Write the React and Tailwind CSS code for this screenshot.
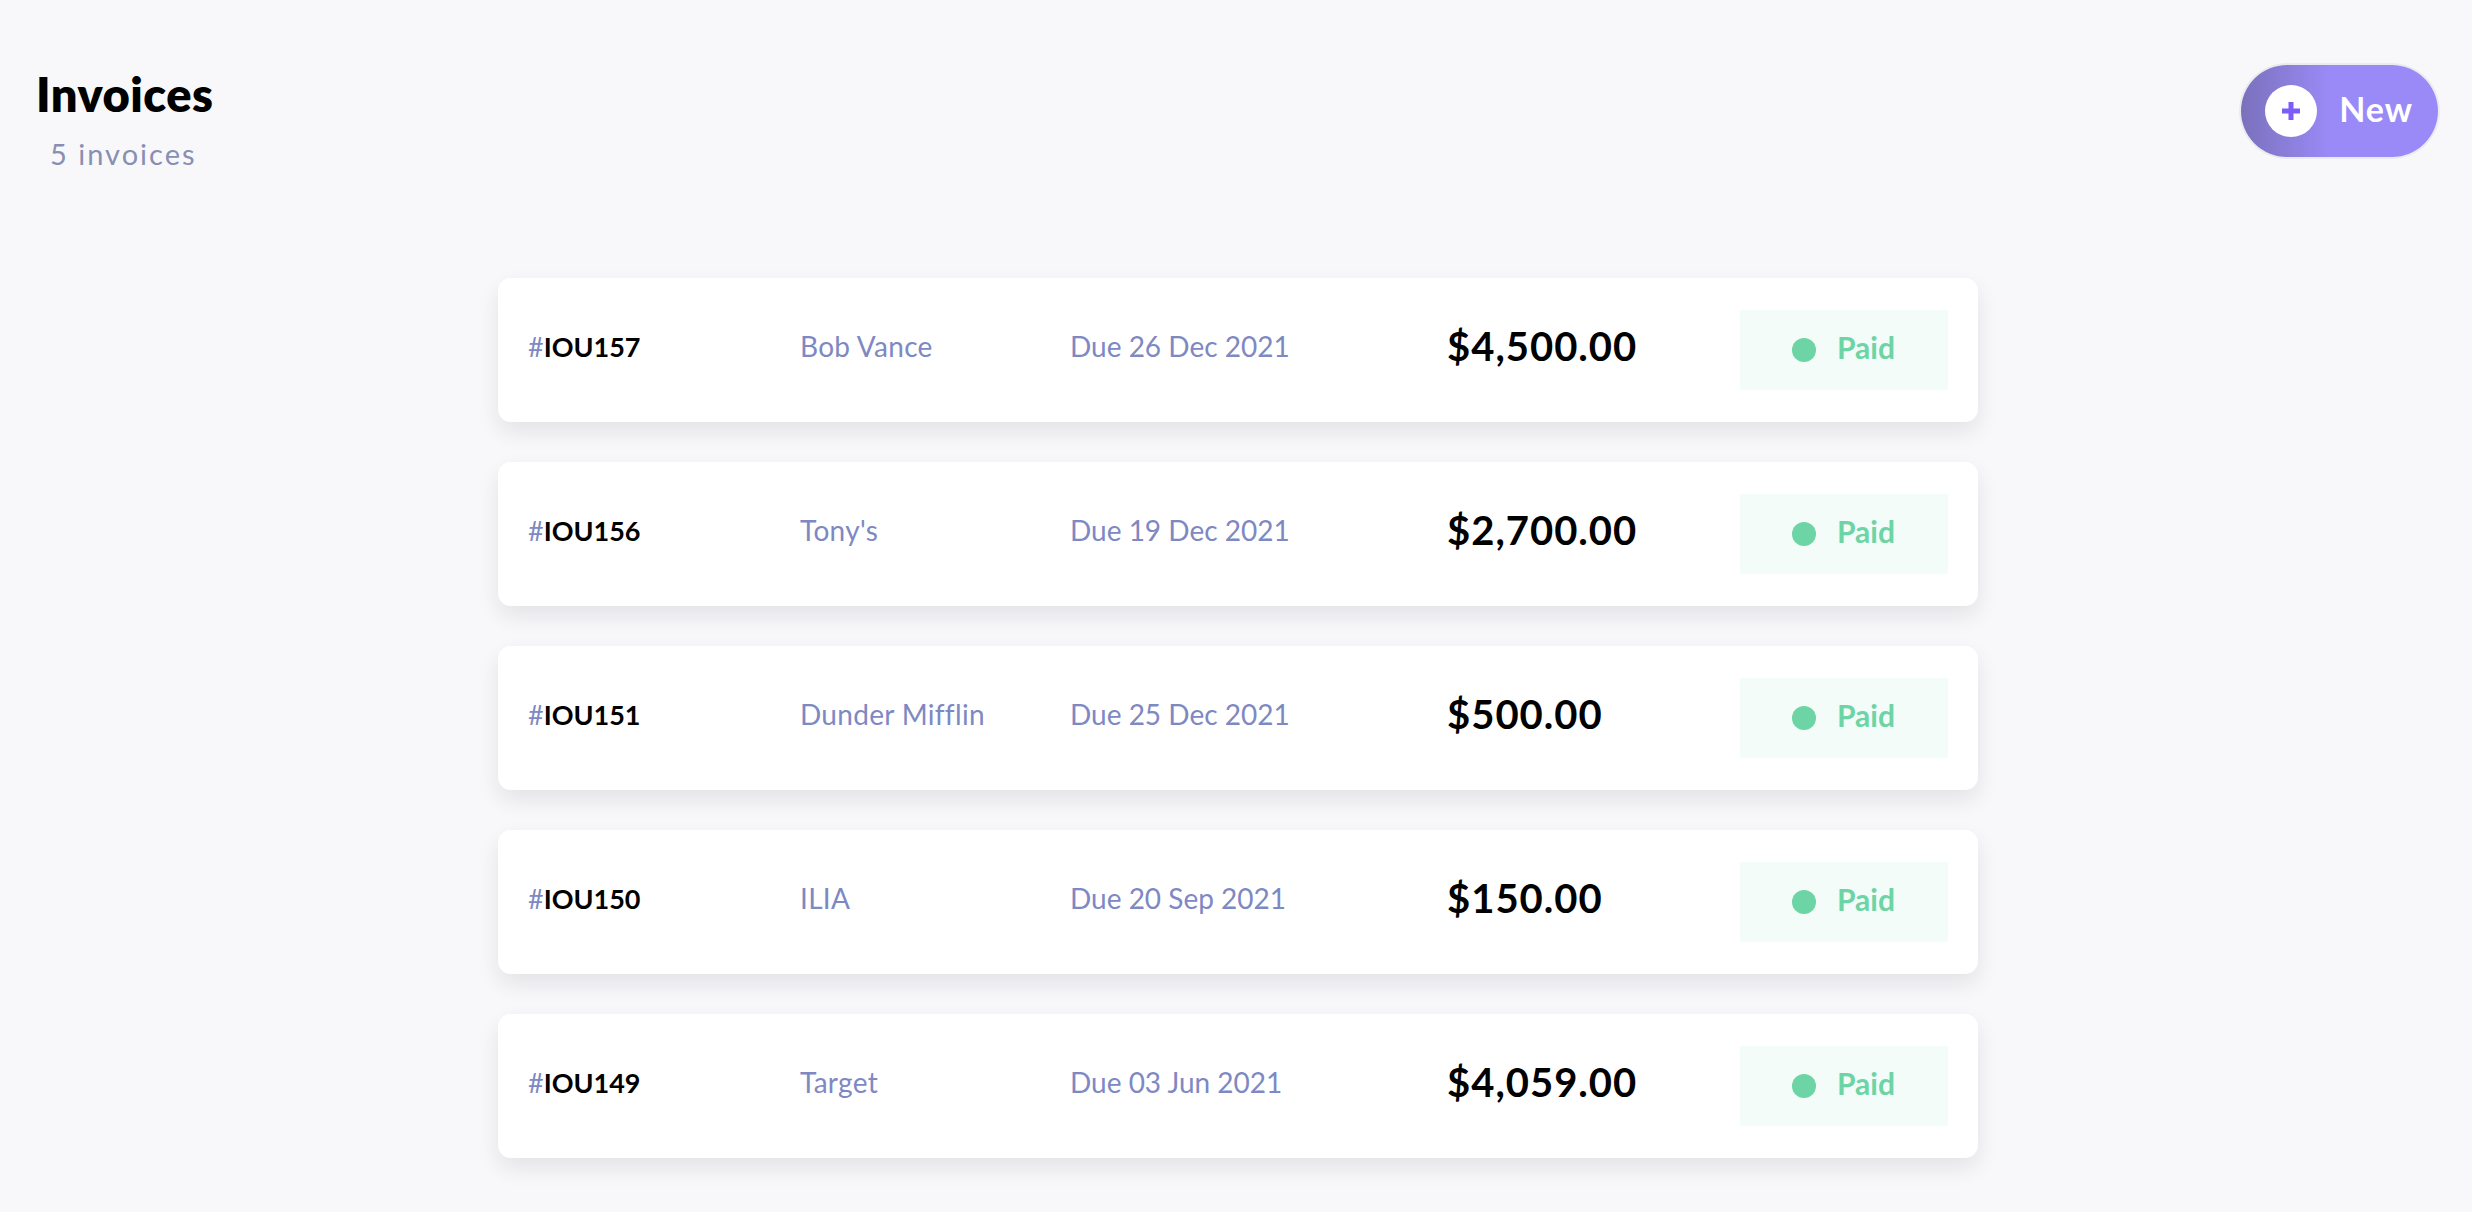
const invoices = [
  { id: "IOU157", client: "Bob Vance", due: "Due 26 Dec 2021", amount: "$4,500.00", status: "Paid" },
  { id: "IOU156", client: "Tony's", due: "Due 19 Dec 2021", amount: "$2,700.00", status: "Paid" },
  { id: "IOU151", client: "Dunder Mifflin", due: "Due 25 Dec 2021", amount: "$500.00", status: "Paid" },
  { id: "IOU150", client: "ILIA", due: "Due 20 Sep 2021", amount: "$150.00", status: "Paid" },
  { id: "IOU149", client: "Target", due: "Due 03 Jun 2021", amount: "$4,059.00", status: "Paid" },
];

function PlusIcon() {
  return (
    <svg width="22" height="22" viewBox="0 0 22 22">
      <path d="M11 2v18M2 11h18" stroke="#7c5dfa" strokeWidth="5" strokeLinecap="butt" />
    </svg>
  );
}

function StatusBadge({ status }) {
  return (
    <div className="ml-auto flex h-[80px] w-[208px] items-center gap-[21px] bg-[#f3fcf8] pl-[52px]">
      <span className="h-[24px] w-[24px] rounded-full bg-[#6dd4a5]" />
      <span className="mb-[6px] text-[30px] leading-none font-bold text-[#6dd4a5]">{status}</span>
    </div>
  );
}

function InvoiceRow({ invoice }) {
  return (
    <div className="flex h-[144px] items-center rounded-[13px] bg-white px-[30px] shadow-[0_10px_22px_rgba(20,20,40,0.09)]">
      <div className="mb-[8px] w-[272px] text-[27px] leading-none">
        <span className="text-[#7e88c3]">#</span>
        <span className="font-bold text-black">{invoice.id}</span>
      </div>
      <div className="mb-[8px] w-[270px] text-[28px] leading-none tracking-[0.3px] text-[#7e88c3]">{invoice.client}</div>
      <div className="mb-[8px] w-[377px] text-[28px] leading-none text-[#7e88c3]">{invoice.due}</div>
      <div className="mb-[8px] text-[40px] leading-none font-bold tracking-[1px] text-black">{invoice.amount}</div>
      <StatusBadge status={invoice.status} />
    </div>
  );
}

export default function App() {
  return (
    <div
      className="min-h-screen bg-[#f8f8fa] pt-[63px] pb-[54px]"
      style={{ fontFamily: "Lato, 'Open Sans', sans-serif" }}
    >
      {/* Header */}
      <div className="flex items-start justify-between pr-[34px] pl-[36px]">
        <div className="mt-[8px]">
          <h1 className="text-[47px] leading-none font-extrabold tracking-[0.5px] text-black">Invoices</h1>
          <p className="mt-[21px] pl-[14px] text-[29px] leading-none tracking-[2px] text-[#888fb4]">5 invoices</p>
        </div>
        <button className="mt-[2px] flex h-[92px] items-center gap-[22px] rounded-full bg-linear-to-r from-[#7a71bc] to-[#9a8af7] to-45% pr-[25px] pl-[24px] shadow-[0_0_0_2px_rgba(0,0,0,0.05)]">
          <span className="flex h-[52px] w-[52px] items-center justify-center rounded-full bg-white">
            <PlusIcon />
          </span>
          <span className="mb-[4px] text-[34px] leading-none font-bold tracking-[1px] text-white">New</span>
        </button>
      </div>

      {/* Invoice list */}
      <div className="mx-auto mt-[110px] flex w-[1480px] translate-x-[2px] flex-col gap-[40px]">
        {invoices.map((inv) => (
          <InvoiceRow key={inv.id} invoice={inv} />
        ))}
      </div>
    </div>
  );
}
